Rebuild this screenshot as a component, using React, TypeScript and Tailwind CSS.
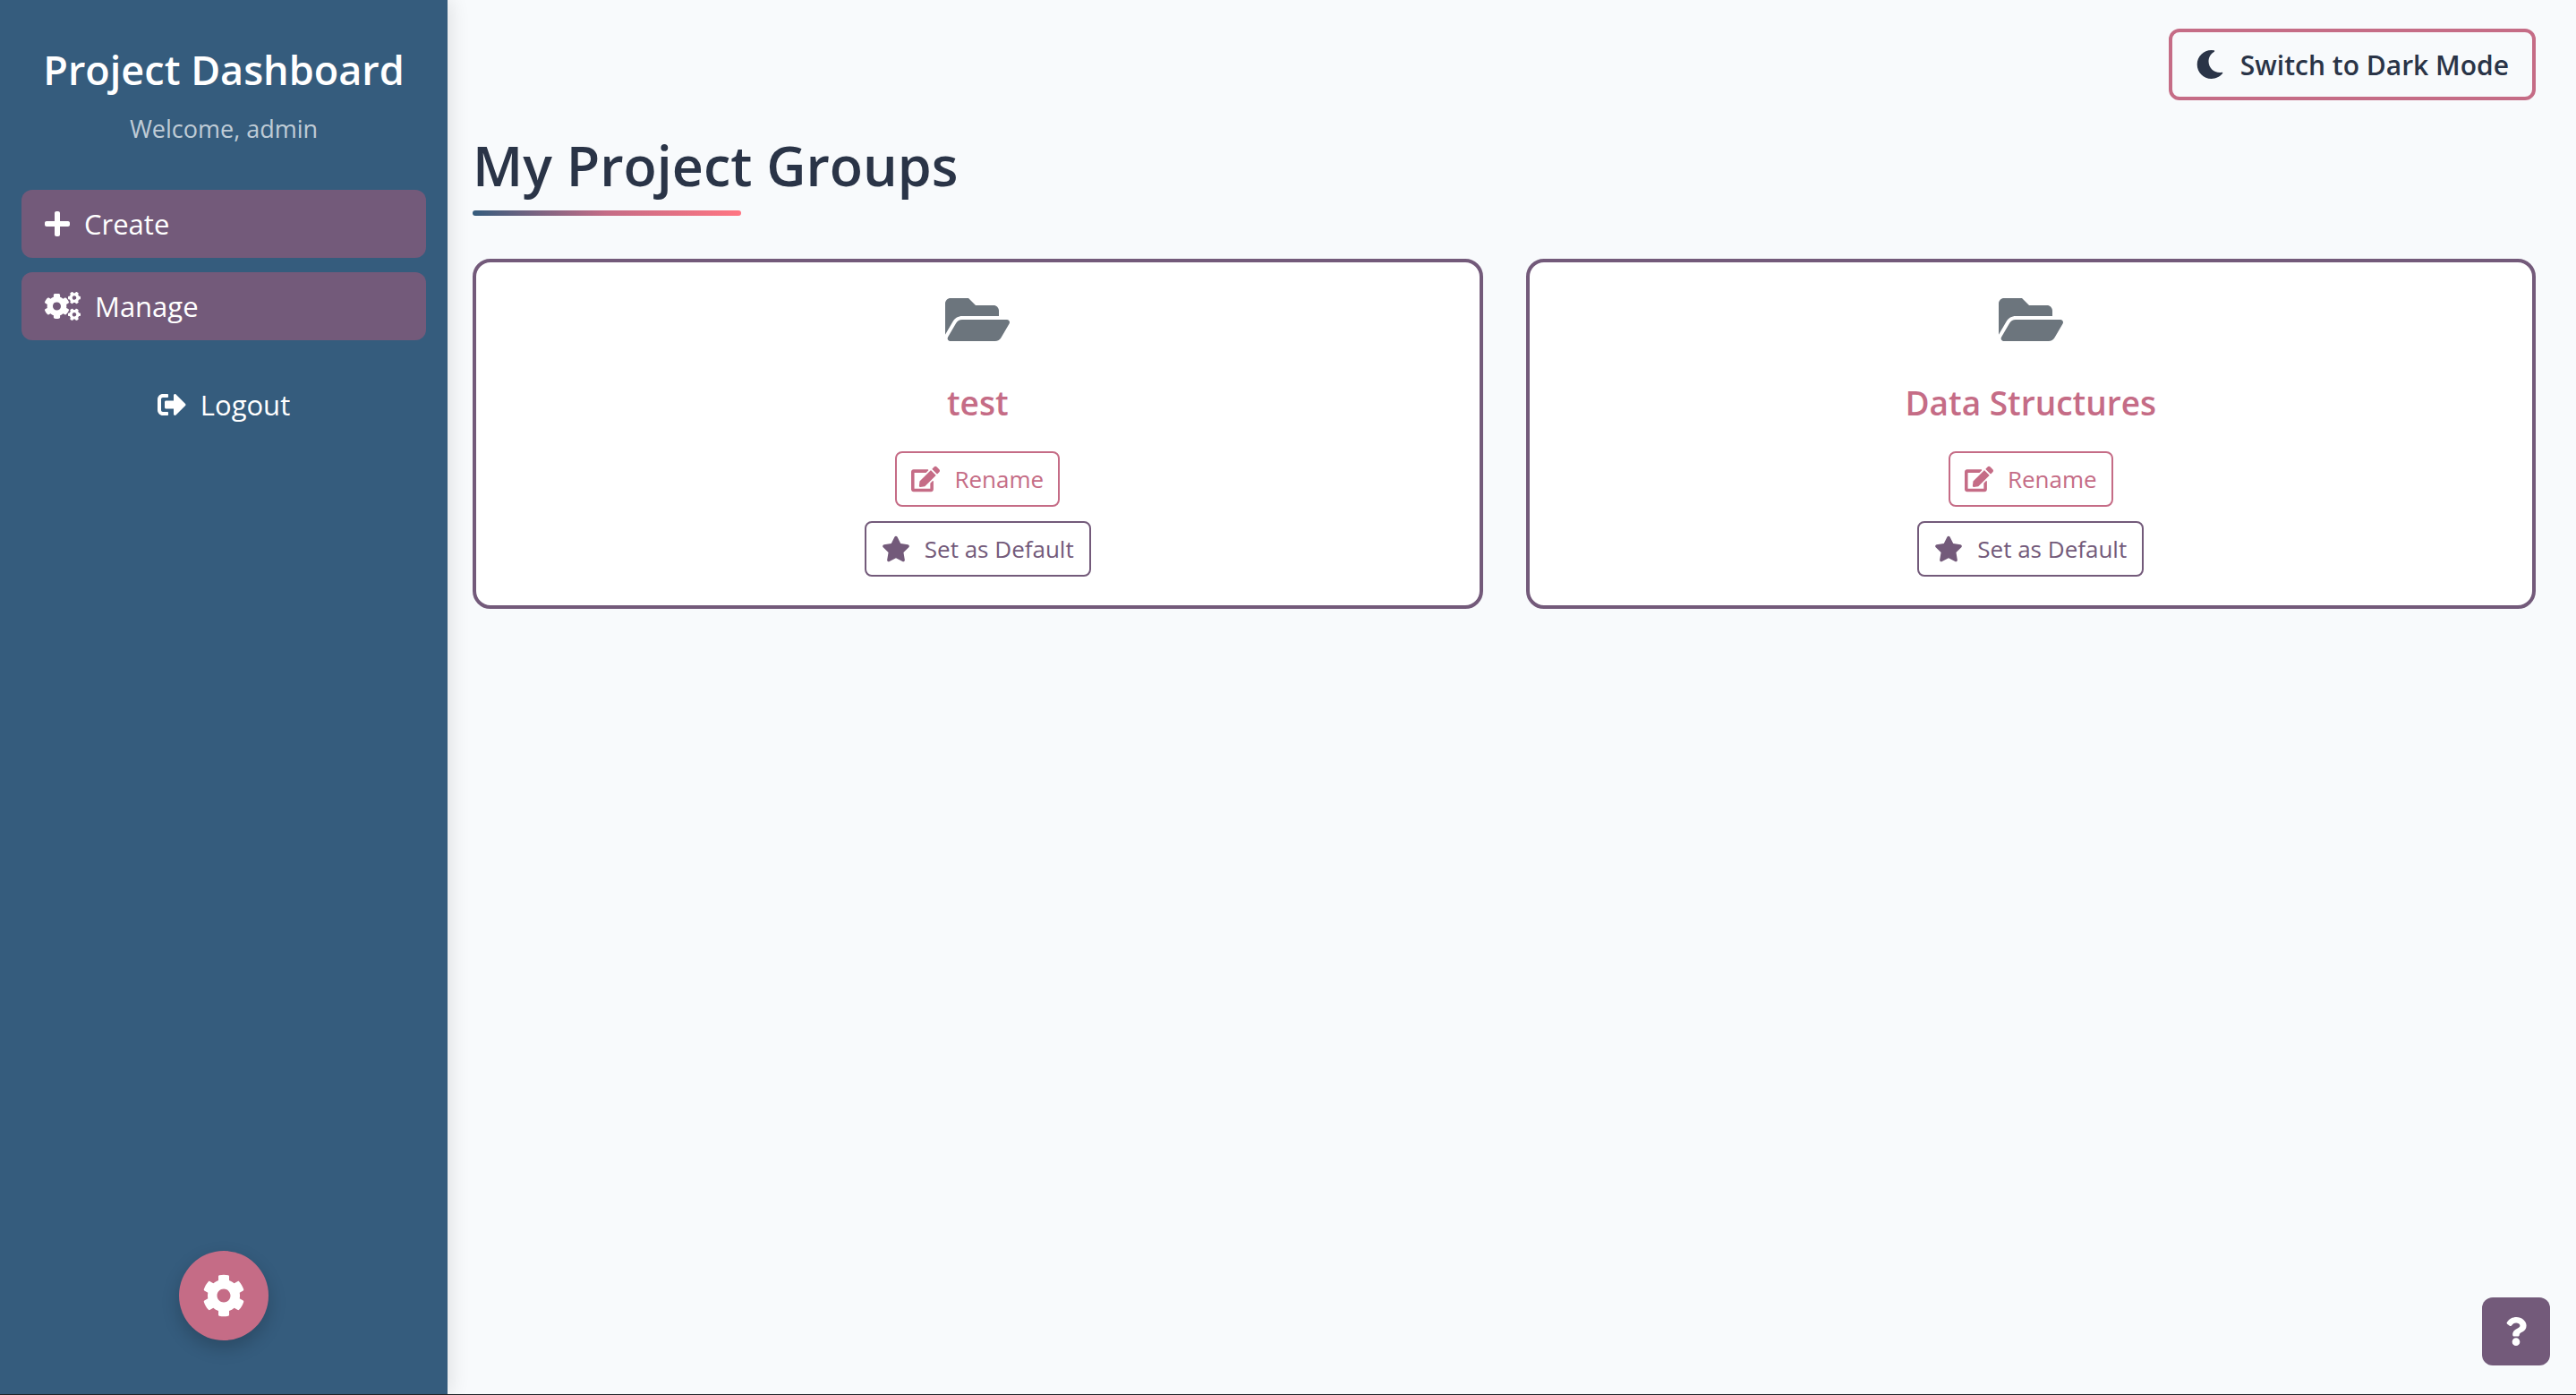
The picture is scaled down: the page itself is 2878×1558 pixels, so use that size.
import type { ReactNode } from "react";
import { FaCog, FaCogs, FaEdit, FaFolderOpen, FaMoon, FaPlus, FaQuestion, FaSignOutAlt, FaStar } from "react-icons/fa";

const groups = ["test", "Data Structures"];

function NavLink({ icon, label }: { icon: ReactNode; label: string }) {
  return (
    <a href="#" className="flex h-[76px] items-center gap-4 rounded-xl bg-[#735a7a] px-[26px] text-[31px] text-white">
      {icon}
      <span>{label}</span>
    </a>
  );
}

function Sidebar() {
  return (
    <aside className="relative z-10 flex w-[500px] shrink-0 flex-col bg-[#355c7d] px-6 pt-12 text-white shadow-[4px_0_20px_rgba(0,0,0,0.1)]">
      <h2 className="text-center text-[45px] leading-[60px] font-semibold whitespace-nowrap">Project Dashboard</h2>
      <p className="mt-4 text-center text-[27px] leading-[40px] text-white/70">Welcome, admin</p>
      <nav className="mt-12 flex flex-col gap-4">
        <NavLink icon={<FaPlus className="h-8 w-7" />} label="Create" />
        <NavLink icon={<FaCogs className="h-8 w-10" />} label="Manage" />
      </nav>
      <a href="#" className="mt-[34px] flex h-[76px] items-center justify-center gap-4 text-[31px]">
        <FaSignOutAlt className="size-8" />
        <span>Logout</span>
      </a>
      <button type="button" aria-label="Settings" className="mt-auto mb-[60px] flex size-[100px] items-center justify-center self-center rounded-full bg-[#c56c86] shadow-[0_8px_20px_rgba(0,0,0,0.2)]">
        <FaCog className="size-12" />
      </button>
    </aside>
  );
}

function GroupCard({ name }: { name: string }) {
  return (
    <article className="flex flex-1 flex-col items-center rounded-[20px] border-4 border-[#735a7a] bg-white px-8 pt-7 pb-8">
      <FaFolderOpen className="size-[72px] text-[#6c757d]" />
      <h3 className="mt-8 text-[37px] leading-[50px] font-semibold text-[#c56c86]">{name}</h3>
      <button type="button" className="mt-[29px] flex h-[62px] items-center gap-4 rounded-lg border-2 border-[#c56c86] px-4 text-[26px] text-[#c56c86]">
        <FaEdit className="size-8" />
        <span>Rename</span>
      </button>
      <button type="button" className="mt-4 flex h-[62px] items-center gap-4 rounded-lg border-2 border-[#735a7a] px-[17px] text-[26px] text-[#735a7a]">
        <FaStar className="size-8" />
        <span>Set as Default</span>
      </button>
    </article>
  );
}

export default function App() {
  return (
    <div className="flex min-h-screen border-b border-[#212529] bg-[#f8fafc] font-['Open_Sans','Noto_Sans',sans-serif] text-[#2a3447]">
      <Sidebar />
      <main className="flex-1 pt-8 pr-[45px] pl-7">
        <div className="flex justify-end">
          <button type="button" className="flex h-20 items-center gap-[18px] rounded-xl border-4 border-[#c56c86] px-[26px] text-[30px] font-semibold">
            <FaMoon className="size-8" />
            <span>Switch to Dark Mode</span>
          </button>
        </div>
        <h1 className="mt-[35px] text-[61px] leading-[76px] font-semibold">My Project Groups</h1>
        <div className="mt-3 h-[6px] w-[300px] rounded-sm bg-[linear-gradient(90deg,#355c7d,#c56c86,#ff7582)]" />
        <section aria-label="Project groups" className="mt-12 flex gap-12">
          {groups.map((name) => (
            <GroupCard key={name} name={name} />
          ))}
        </section>
      </main>
      <button type="button" aria-label="Help" className="fixed right-[29px] bottom-[33px] flex size-[76px] items-center justify-center rounded-xl bg-[#735a7a] text-white">
        <FaQuestion className="size-8" />
      </button>
    </div>
  );
}
